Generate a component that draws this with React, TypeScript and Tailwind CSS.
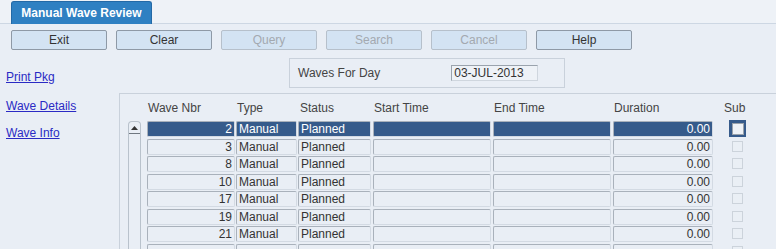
import React from 'react';

const buttons = [
  { label: 'Exit', enabled: true },
  { label: 'Clear', enabled: true },
  { label: 'Query', enabled: false },
  { label: 'Search', enabled: false },
  { label: 'Cancel', enabled: false },
  { label: 'Help', enabled: true },
];

const waves = [2, 3, 8, 10, 17, 19, 21, null];

const cell =
  'h-[16px] border border-[#a9b1bb] border-r-[#d3dae3] border-b-[#d3dae3] rounded-[2px] leading-[14px] truncate';

function Row({ nbr, selected, first, odd }: { nbr: number | null; selected: boolean; first: boolean; odd: boolean }) {
  const tone = selected
    ? 'bg-[#365b8b] border-[#2b4a74] text-white'
    : 'bg-[#e9eef5] text-[#333]';
  const space = first ? '' : odd ? 'mt-[2px]' : 'mt-[1px]';
  return (
    <div className={`flex h-[16px] shrink-0 ${space}`}>
      <div className={`${cell} ${tone} w-[88px] text-right pr-[2px]`}>{nbr ?? ''}</div>
      <div className={`${cell} ${tone} w-[61px] ml-[1px] pl-[2px]`}>{nbr !== null ? 'Manual' : ''}</div>
      <div className={`${cell} ${tone} w-[73px] ml-[1px] pl-[2px]`}>{nbr !== null ? 'Planned' : ''}</div>
      <div className={`${cell} ${tone} w-[118px] ml-[2px]`}></div>
      <div className={`${cell} ${tone} w-[118px] ml-[2px]`}></div>
      <div className={`${cell} ${tone} w-[100px] ml-[2px] text-right pr-[2px]`}>{nbr !== null ? '0.00' : ''}</div>
      <div
        className={`ml-[16px] w-[17px] h-[17px] -mt-[1px] flex items-center justify-center ${
          selected ? 'bg-[#365b8b]' : ''
        }`}
      >
        <div
          className={`border ${
            selected ? 'w-[12px] h-[12px] border-[#9aa2ab] bg-[#eef2f7]' : 'w-[11px] h-[11px] border-[#ccd3db] bg-[#eaeff5]'
          }`}
        ></div>
      </div>
    </div>
  );
}

export default function App() {
  return (
    <div className="w-[776px] h-[249px] overflow-hidden bg-[#e9eef5] font-['Liberation_Sans',Arial,sans-serif] text-[12px] text-[#333]">
      {/* tab strip */}
      <div className="h-[24px] bg-[#eef2f7] border-b border-[#cdd7e3] pl-[11px] pt-[1px]">
        <div className="w-[141px] h-[23px] bg-[#2f80c2] border border-[#2369a6] border-b-0 rounded-t-[3px] text-white font-bold text-[12px] flex items-center justify-center">
          Manual Wave Review
        </div>
      </div>

      {/* toolbar */}
      <div className="flex gap-[9px] pl-[11px] pt-[6px]">
        {buttons.map((b) => (
          <button
            key={b.label}
            className={`w-[96px] h-[20px] rounded-[2px] border bg-[#d3e3f3] leading-[18px] ${
              b.enabled ? 'border-[#8e99a6] text-[#333]' : 'border-[#b6c0cb] text-[#a3a9b0]'
            }`}
          >
            {b.label}
          </button>
        ))}
      </div>

      <div className="flex">
        {/* links */}
        <div className="w-[119px] shrink-0 pl-[6px] flex flex-col text-[#2a2ac4]">
          <a className="underline mt-[20px] leading-[14px]">Print Pkg</a>
          <a className="underline mt-[15px] leading-[14px]">Wave Details</a>
          <a className="underline mt-[13px] leading-[14px]">Wave Info</a>
        </div>

        <div className="flex-1">
          {/* waves for day */}
          <div className="ml-[170px] mt-[8px] w-[276px] h-[30px] border border-[#c9d1db] flex items-center pl-[8px]">
            <span className="text-[#444]">Waves For Day</span>
            <div className="ml-[71px] w-[87px] h-[16px] border border-[#9aa3ad] border-r-[#cfd6de] border-b-[#cfd6de] bg-[#eef2f7] pl-[2px] leading-[14px] text-[#333]">
              03-JUL-2013
            </div>
          </div>

          {/* grid panel */}
          <div className="mt-[5px] h-[160px] border-t border-l border-[#c9d1db] overflow-hidden">
            <div className="flex h-[27px] items-end pb-[4px] pl-[27px] text-[#444]">
              <span className="w-[89px] pl-[1px]">Wave Nbr</span>
              <span className="w-[63px] pl-[1px]">Type</span>
              <span className="w-[74px] pl-[1px]">Status</span>
              <span className="w-[120px] pl-[1px]">Start Time</span>
              <span className="w-[120px] pl-[1px]">End Time</span>
              <span className="w-[111px] pl-[1px]">Duration</span>
              <span>Sub</span>
            </div>
            <div className="flex">
              <div className="ml-[8px] w-[13px] h-[140px] border-l border-r border-t border-[#b9c2cc] rounded-t-[4px] flex flex-col">
                <div className="h-[12px] border-b border-[#6f7780] flex items-center justify-center">
                  <svg width="7" height="4" viewBox="0 0 7 4">
                    <path d="M0 4 L3.5 0 L7 4 Z" fill="#333" />
                  </svg>
                </div>
              </div>
              <div className="ml-[6px] flex flex-col">
                {waves.map((n, i) => (
                  <Row key={i} nbr={n} selected={i === 0} first={i === 0} odd={i % 2 === 1} />
                ))}
              </div>
            </div>
          </div>
        </div>
      </div>
    </div>
  );
}
